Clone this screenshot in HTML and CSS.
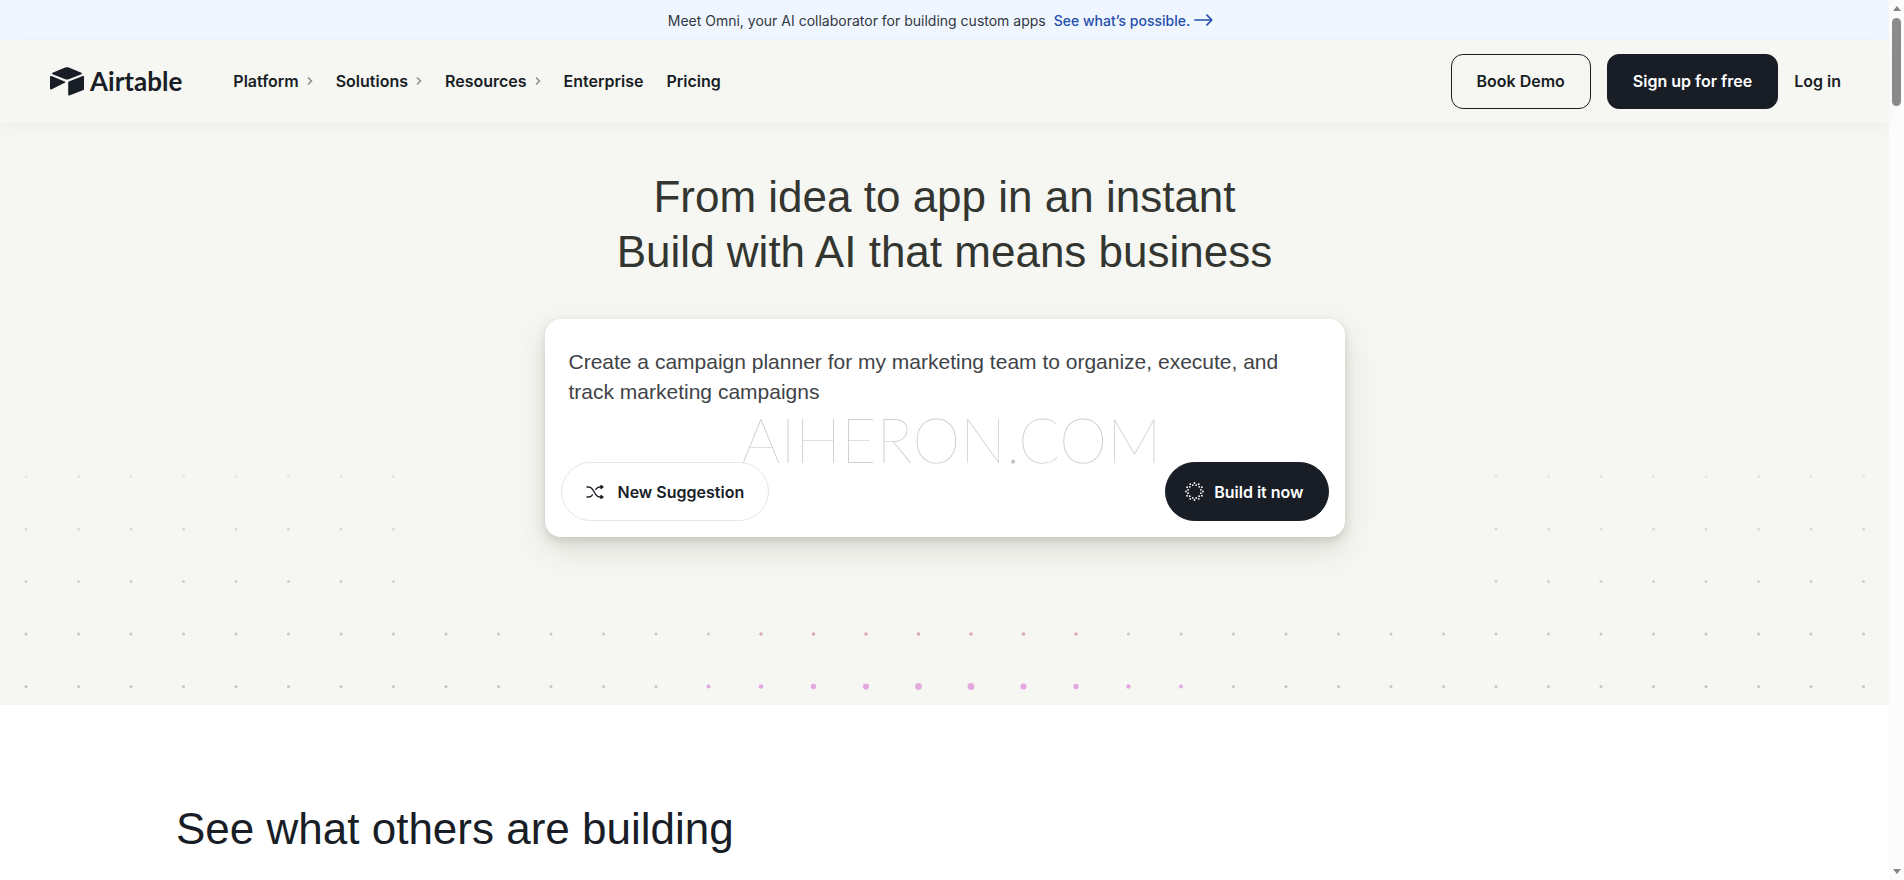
FILE: index.html
```
<!DOCTYPE html>
<html lang="en">
<head>
    <meta charset="UTF-8">
    <meta name="viewport" content="width=device-width, initial-scale=1.0">
    <title>Airtable</title>
    <link rel="stylesheet" href="styles.css">
</head>
<body>
    <div class="page">
        <div class="banner">
            <span>Meet Omni, your AI collaborator for building custom apps</span>
            <a href="#" class="banner-link">See what’s possible.
                <svg width="19" height="12" viewBox="0 0 19 12" fill="none" stroke="currentColor" stroke-width="1.7" stroke-linecap="round" stroke-linejoin="round">
                    <path d="M1 6h16.5M13 1.2 17.8 6 13 10.8"/>
                </svg>
            </a>
        </div>

        <header class="header">
            <a href="#" class="logo">
                <svg width="34" height="29" viewBox="0 0 34 29" fill="#181d26">
                    <path d="M15.2.5 2.6 5.7c-.7.3-.7 1.3 0 1.6l12.7 5c1.1.4 2.3.4 3.4 0l12.7-5c.7-.3.7-1.3 0-1.6L18.8.5c-1.2-.5-2.4-.5-3.6 0z"/>
                    <path d="M18.2 15.2v12.5c0 .6.6 1 1.2.8l14-5.5c.4-.1.6-.5.6-.8V9.7c0-.6-.6-1-1.2-.8l-14 5.5c-.4.1-.6.5-.6.8z"/>
                    <path d="m14.9 15.800-4.200 2L1.300 22.400c-.6.3-1.300-.1-1.300-.8V9.900c0-.2.1-.4.3-.6.3-.3.7-.3 1.100-.2l13.300 5.300c.7.2.7 1.100.2 1.400z"/>
                </svg>
                <span>Airtable</span>
            </a>
            <nav class="nav">
                <a href="#">Platform
                    <svg class="chevron" viewBox="0 0 6 10"><path d="M1 1.5 4.500 5 1 8.500"/></svg>
                </a>
                <a href="#">Solutions
                    <svg class="chevron" viewBox="0 0 6 10"><path d="M1 1.5 4.500 5 1 8.500"/></svg>
                </a>
                <a href="#">Resources
                    <svg class="chevron" viewBox="0 0 6 10"><path d="M1 1.5 4.500 5 1 8.500"/></svg>
                </a>
                <a href="#">Enterprise</a>
                <a href="#">Pricing</a>
            </nav>
            <div class="actions">
                <button class="btn btn-outline">Book Demo</button>
                <button class="btn btn-dark">Sign up for free</button>
                <a href="#" class="login">Log in</a>
            </div>
        </header>

        <main>
            <section class="hero">
                <svg class="dots" id="dots" viewBox="0 0 1889 290" aria-hidden="true"></svg>
                <h1>From idea to app in an instant<br>Build with AI that means business</h1>
                <form class="prompt">
                    <textarea class="prompt-text" rows="3" aria-label="Describe your app">Create a campaign planner for my marketing team to organize, execute, and track marketing campaigns</textarea>
                    <span class="watermark">AIHERON.COM</span>
                    <div class="prompt-actions">
                        <button type="button" class="pill pill-light">
                            <svg width="18" height="14" viewBox="0 0 18 14" fill="none" stroke="currentColor" stroke-width="1.3" stroke-linecap="round" stroke-linejoin="round">
                                <path d="M1 2h1.5c1.7 0 3 .8 3.9 2.200l3.400 5.400C10.700 11 12 12 13.800 12H16.500"/>
                                <path d="M1 12h1.500c1.700 0 3-.8 3.900-2.200M9.800 4.400C10.700 3 12 2 13.800 2H16.500"/>
                                <path d="M15 .6 17 2 15 3.600zM15 10.400 17 12 15 13.500z" fill="currentColor"/>
                            </svg>
                            New Suggestion
                        </button>
                        <button type="button" class="pill pill-dark">
                            <svg id="burst" width="19" height="19" viewBox="0 0 19 19" fill="#fff"></svg>
                            Build it now
                        </button>
                    </div>
                </form>
            </section>

            <section class="examples">
                <h2>See what others are building</h2>
            </section>
        </main>
    </div>

    <div class="scrollbar">
        <span class="arrow arrow-up"></span>
        <span class="thumb"></span>
        <span class="arrow arrow-down"></span>
    </div>

    <script>
        const svgNS = 'http://www.w3.org/2000/svg';

        function addDot(parent, x, y, r, fill, opacity) {
            const dot = document.createElementNS(svgNS, 'circle');
            dot.setAttribute('cx', x);
            dot.setAttribute('cy', y);
            dot.setAttribute('r', r);
            dot.setAttribute('fill', fill);
            dot.setAttribute('opacity', opacity);
            parent.appendChild(dot);
        }

        // Dot grid, fading out towards the top
        const grid = document.getElementById('dots');
        const rowOpacity = [0.08, 0.4, 0.6, 0.8, 1, 1];
        const pinkRadius = [2, 2.3, 2.7, 3.1, 3.4, 3.4, 3.1, 2.7, 2.2, 2];

        rowOpacity.forEach((opacity, row) => {
            for (let col = 0; col < 36; col++) {
                // keep the area behind the prompt empty
                if (row < 4 && col > 7 && col < 28) continue;
                let r = 1.5;
                let fill = '#c6c7c2';
                if (row === 4 && col > 13 && col < 21) {
                    fill = '#dba9bb';
                    r = 1.8;
                }
                if (row === 5 && col > 12 && col < 23) {
                    fill = '#e3a9e0';
                    r = pinkRadius[col - 13];
                }
                addDot(grid, 26 + col * 52.5, 9 + row * 52.5, r, fill, opacity);
            }
        });

        // Two rings of small dots for the build icon
        const burst = document.getElementById('burst');
        for (let i = 0; i < 24; i++) {
            const angle = i * Math.PI / 12;
            const radius = i % 2 ? 6.6 : 8.5;
            addDot(burst, 9.5 + radius * Math.sin(angle), 9.5 - radius * Math.cos(angle), 0.9, '#fff', 1);
        }
    </script>
</body>
</html>
```
FILE: styles.css
```
:root {
    --ink: #181d26;
    --cream: #f6f7f2;
    --blue: #254fad;
    --sans: "Liberation Sans", Arial, sans-serif;
    --medium: Inter, "Liberation Sans", sans-serif;
}

* {
    margin: 0;
    padding: 0;
    box-sizing: border-box;
}

body {
    display: flex;
    min-height: 100vh;
    font-family: var(--sans);
    color: var(--ink);
    background: #fff;
}

a {
    color: inherit;
    text-decoration: none;
}

button {
    font: inherit;
    color: inherit;
    cursor: pointer;
}

.page {
    flex: 1;
    min-width: 0;
}

/* Banner */
.banner {
    display: flex;
    justify-content: center;
    align-items: center;
    gap: 8px;
    height: 40px;
    padding-right: 8px;
    background: #eff6ff;
    color: #333840;
    font-family: var(--medium);
    font-size: 14px;
}

.banner-link {
    display: flex;
    align-items: center;
    gap: 4px;
    color: var(--blue);
    font-weight: 500;
}

/* Header */
.header {
    position: relative;
    z-index: 1;
    display: flex;
    align-items: center;
    height: 82px;
    padding: 0 48px 0 50px;
    background: var(--cream);
    box-shadow: 0 4px 16px rgba(0, 0, 0, 0.04);
    font-family: var(--medium);
    font-size: 16px;
    font-weight: 600;
}

.logo {
    display: flex;
    align-items: center;
    gap: 6px;
    font-family: Lato, sans-serif;
    font-size: 26px;
    font-weight: 700;
}

.nav {
    display: flex;
    gap: 23px;
    margin-left: 51px;
}

.nav a {
    display: flex;
    align-items: center;
    gap: 8px;
}

.chevron {
    width: 6px;
    height: 10px;
    fill: none;
    stroke: #8a8c8e;
    stroke-width: 1.5;
}

.actions {
    display: flex;
    align-items: center;
    gap: 16px;
    margin-left: auto;
}

.btn {
    height: 55px;
    padding: 0 25px;
    border: 1px solid var(--ink);
    border-radius: 12px;
    background: none;
}

.btn-dark {
    background: var(--ink);
    color: #fff;
}

/* Hero */
.hero {
    position: relative;
    display: flex;
    flex-direction: column;
    align-items: center;
    padding: 47px 24px 168px;
    background: var(--cream);
}

.dots {
    position: absolute;
    left: 0;
    bottom: 0;
    width: 100%;
}

h1,
h2 {
    font-size: 44px;
    font-weight: 400;
    line-height: 55px;
}

h1 {
    color: #333530;
    text-align: center;
}

.prompt {
    position: relative;
    width: 100%;
    max-width: 800px;
    margin-top: 40px;
    padding: 28px 16px 16px;
    border-radius: 16px;
    background: #fff;
    box-shadow: 0 12px 32px rgba(60, 62, 40, 0.14), 0 4px 10px rgba(60, 62, 40, 0.16);
}

.prompt-text {
    display: block;
    width: 100%;
    height: 115px;
    padding: 0 8px;
    border: none;
    outline: none;
    resize: none;
    background: none;
    color: #414347;
    font-family: var(--sans);
    font-size: 21px;
    line-height: 30px;
}

.watermark {
    position: absolute;
    top: 84px;
    left: 50%;
    padding-left: 14px;
    transform: translateX(-50%);
    color: #c4c4c4;
    font-family: Lato, sans-serif;
    font-size: 61px;
    font-weight: 100;
    pointer-events: none;
}

.prompt-actions {
    position: relative;
    display: flex;
    justify-content: space-between;
}

.pill {
    display: flex;
    align-items: center;
    height: 59px;
    border: 1px solid #e6e6e6;
    border-radius: 30px;
    background: #fff;
    font-family: var(--medium);
    font-size: 16px;
    font-weight: 600;
}

.pill-light {
    gap: 14px;
    padding: 0 24px;
}

.pill-dark {
    gap: 10px;
    padding: 0 24px 0 19px;
    border-color: var(--ink);
    background: var(--ink);
    color: #fff;
}

/* Examples */
.examples {
    padding: 96px 176px 24px;
}

/* Scrollbar */
.scrollbar {
    display: flex;
    flex-direction: column;
    align-items: center;
    width: 15px;
    padding: 6px 0;
    background: #fcfcfc;
}

.arrow {
    border: 4px solid transparent;
}

.arrow-up {
    border-top: none;
    border-bottom: 5px solid #858585;
}

.arrow-down {
    margin-top: auto;
    border-bottom: none;
    border-top: 5px solid #858585;
}

.thumb {
    width: 9px;
    height: 88px;
    margin-top: 7px;
    border-radius: 5px;
    background: #8b8b8b;
}
```
